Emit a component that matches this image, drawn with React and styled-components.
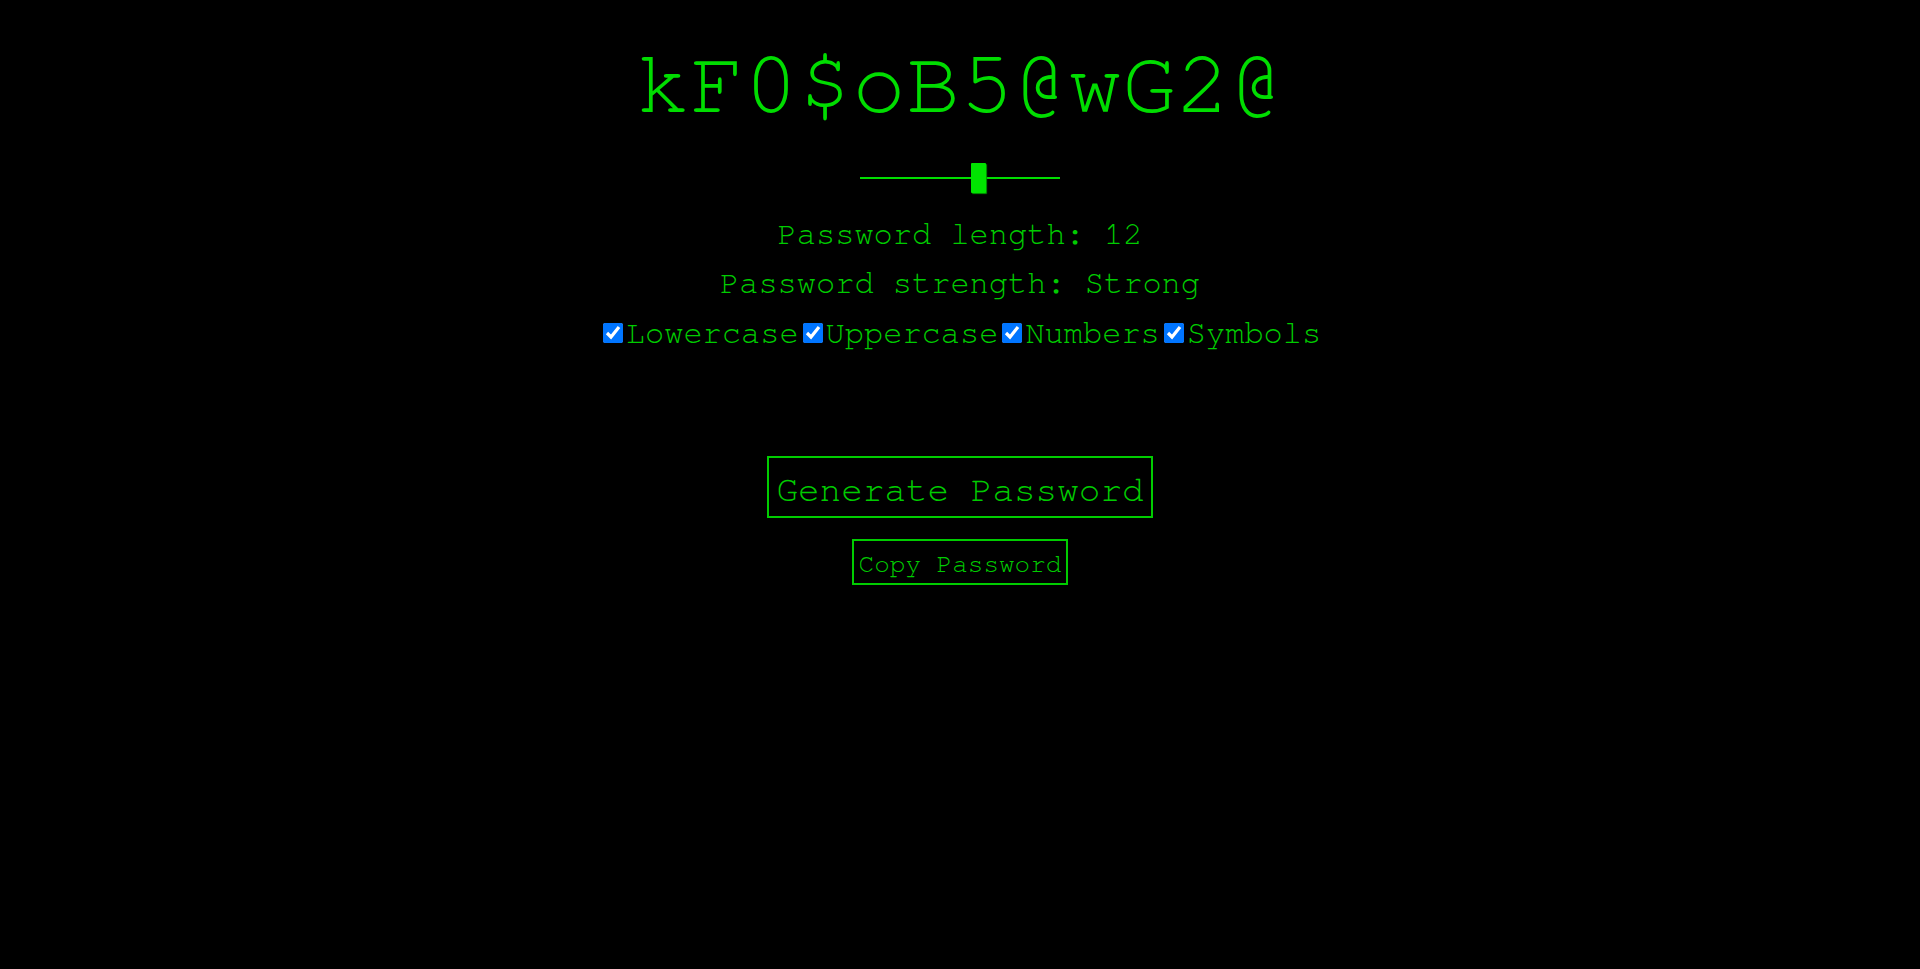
import React, { useState } from "react";
import styled, { createGlobalStyle } from "styled-components";

const mono = `"FreeMono", "TeX Gyre Cursor", "Liberation Mono", monospace`;

const GlobalStyle = createGlobalStyle`
  html, body {
    margin: 0;
    padding: 0;
    background: #000;
  }
  body {
    font-family: ${mono};
    color: #00cc00;
  }
`;

const Page = styled.main`
  min-height: 969px;
  display: flex;
  flex-direction: column;
  align-items: center;
  padding-top: 40px;
  box-sizing: border-box;
  background: #000;
`;

const PasswordDisplay = styled.h1`
  margin: 0;
  font-family: ${mono};
  font-weight: normal;
  font-size: 90px;
  line-height: normal;
  color: #00dd00;
  white-space: pre;
`;

const Slider = styled.input`
  -webkit-appearance: none;
  appearance: none;
  width: 200px;
  height: 30px;
  margin: 33px 0 0;
  padding: 0;
  background: transparent;
  display: block;

  &::-webkit-slider-runnable-track {
    height: 2px;
    background: #00dd00;
    border: none;
  }
  &::-webkit-slider-thumb {
    -webkit-appearance: none;
    appearance: none;
    width: 15px;
    height: 30px;
    margin-top: -14px;
    background: #00e400;
    border: none;
    border-radius: 1px;
    box-shadow: 1px 1px 1px #009a00;
  }
  &:focus {
    outline: none;
  }
`;

const InfoLine = styled.p`
  margin: ${(p) => (p.$first ? "17px" : "0")} 0 0;
  font-size: 32px;
  line-height: 49px;
  color: #00cc00;
  white-space: pre;
`;

const OptionsRow = styled.div`
  display: flex;
  align-items: baseline;
  font-size: 32px;
  line-height: 50px;
  color: #00cc00;
`;

const Option = styled.label`
  display: inline-flex;
  align-items: baseline;
  cursor: pointer;
`;

const Check = styled.input`
  width: 20px;
  height: 20px;
  margin: 3px 3px 3px 4px;
  accent-color: #0075ff;
`;

const ButtonBase = styled.button`
  font-family: ${mono};
  background: #000;
  color: #00cc00;
  border: 2px solid #00cc00;
  line-height: normal;
  cursor: pointer;
`;

const GenerateButton = styled(ButtonBase)`
  font-size: 36px;
  padding: 14px 7px 8px;
  margin-top: 98px;
`;

const CopyButton = styled(ButtonBase)`
  font-size: 26px;
  padding: 10px 5px 6px;
  margin-top: 21px;
`;

export default function App() {
  const [length, setLength] = useState(12);
  const [opts, setOpts] = useState({
    Lowercase: true,
    Uppercase: true,
    Numbers: true,
    Symbols: true,
  });

  return (
    <>
      <GlobalStyle />
      <Page>
        <PasswordDisplay>kF0$oB5@wG2@</PasswordDisplay>
        <Slider
          type="range"
          min={0}
          max={20}
          value={length}
          onChange={(e) => setLength(Number(e.target.value))}
        />
        <InfoLine $first>Password length: {length}</InfoLine>
        <InfoLine>Password strength: Strong</InfoLine>
        <OptionsRow>
          {Object.keys(opts).map((k) => (
            <Option key={k}>
              <Check
                type="checkbox"
                checked={opts[k]}
                onChange={() => setOpts({ ...opts, [k]: !opts[k] })}
              />
              {k}
            </Option>
          ))}
        </OptionsRow>
        <GenerateButton>Generate Password</GenerateButton>
        <CopyButton>Copy Password</CopyButton>
      </Page>
    </>
  );
}
